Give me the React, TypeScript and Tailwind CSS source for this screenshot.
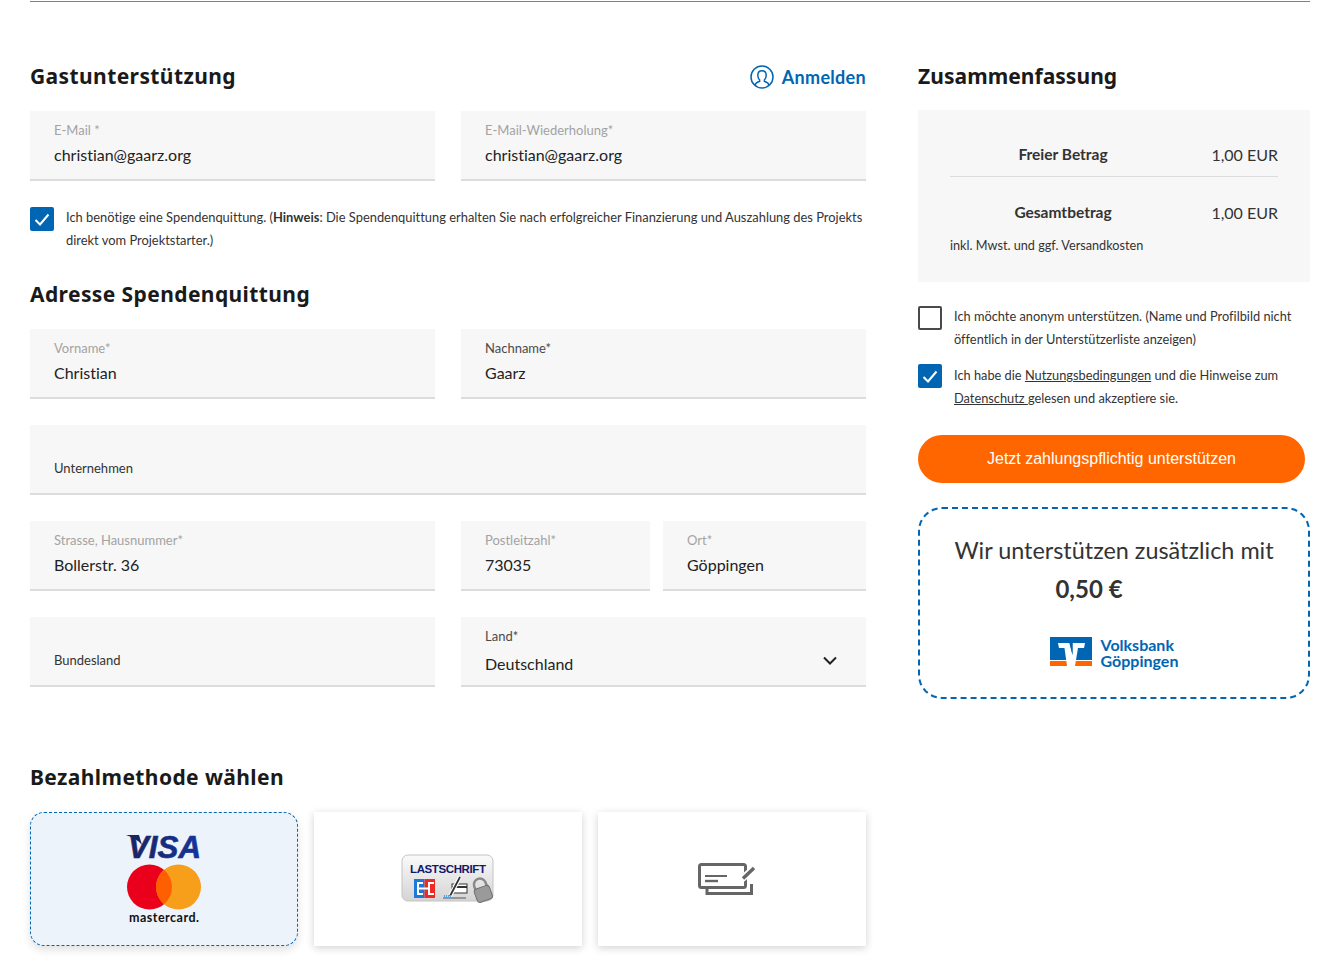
import React from 'react';

const font = { fontFamily: 'Lato, sans-serif' };

function Field({ label, value, faded = true, className = 'w-[405px]', chevron = false }: { label: string; value?: string; faded?: boolean; className?: string; chevron?: boolean }) {
  return (
    <div className={`relative h-[70px] bg-[#f7f7f7] border-b-2 border-[#dcdcdc] px-6 ${className}`}>
      {value ? (
        <>
          <div className={`pt-[11px] text-[13px] leading-[16px] ${faded ? 'text-[#a3a3a3]' : 'text-[#4a4a4a]'}`}>{label}</div>
          <div className={`${chevron ? 'mt-[9px]' : 'mt-[6px]'} text-[16px] leading-[22px] text-[#222]`}>{value}</div>
        </>
      ) : (
        <div className="pt-[35px] text-[13px] leading-[16px] text-[#333]">{label}</div>
      )}
      {chevron && (
        <svg className="absolute right-[28px] top-[39px]" width="16" height="10" viewBox="0 0 16 10" fill="none">
          <path d="M2 1.5 8 7.5 14 1.5" stroke="#222" strokeWidth="2" />
        </svg>
      )}
    </div>
  );
}

function Check({ on }: { on: boolean }) {
  if (!on) return <div className="w-6 h-6 shrink-0 rounded-[2px] border-2 border-[#4a4a4a] bg-white" />;
  return (
    <div className="w-6 h-6 shrink-0 rounded-[2px] bg-[#0066b3] flex items-center justify-center">
      <svg width="16" height="13" viewBox="0 0 16 13" fill="none">
        <path d="M1.5 7 6 11.5 14.5 1.5" stroke="#fff" strokeWidth="2" />
      </svg>
    </div>
  );
}

function Heading({ children, tight = false }: { children: React.ReactNode; tight?: boolean }) {
  return <h2 className={`font-['Noto_Sans',sans-serif] text-[21px] leading-[28px] font-bold text-[#1a1a1a] ${tight ? 'tracking-[0.05px]' : 'tracking-[0.4px]'}`}>{children}</h2>;
}

function CardLogos() {
  return (
    <svg width="76" height="92" viewBox="0 0 76 92" className="overflow-visible">
      <defs>
        <linearGradient id="visa" x1="0" y1="0" x2="1" y2="0">
          <stop offset="0" stopColor="#1a2460" />
          <stop offset="1" stopColor="#14349c" />
        </linearGradient>
      </defs>
      <path d="M0 2h13l3 10C12 7 6 4 0 2z" fill="#1a2460" />
      <text x="2" y="25" textLength="73" lengthAdjust="spacingAndGlyphs" fontFamily="Liberation Sans, sans-serif" fontSize="31" fontWeight="700" fontStyle="italic" fill="url(#visa)" stroke="url(#visa)" strokeWidth="0.6">VISA</text>
      <circle cx="23.500" cy="54" r="22.500" fill="#eb001b" />
      <circle cx="52.500" cy="54" r="22.500" fill="#f79e1b" />
      <path d="M38 36.800a22.500 22.500 0 0 1 0 34.400a22.500 22.500 0 0 1 0-34.400z" fill="#ff5f00" />
      <text x="3" y="89" textLength="70" fontFamily="Lato, sans-serif" fontSize="12.500" fontWeight="700" fill="#111">mastercard.</text>
    </svg>
  );
}

function LastschriftLogo() {
  return (
    <svg width="98" height="52" viewBox="0 0 98 52">
      <defs>
        <linearGradient id="ls" x1="0" y1="0" x2="0" y2="1">
          <stop offset="0" stopColor="#fafafa" />
          <stop offset="1" stopColor="#d4d4d4" />
        </linearGradient>
      </defs>
      <rect x="3" y="2" width="91" height="46" rx="6" fill="url(#ls)" stroke="#c4c4c4" />
      <text x="49" y="19.500" textAnchor="middle" textLength="76" fontFamily="Liberation Sans, sans-serif" fontSize="11.500" fontWeight="700" fill="#14186b">LASTSCHRIFT</text>
      <rect x="15" y="26" width="10.500" height="19" fill="#1f78d8" />
      <rect x="25.500" y="26" width="10.500" height="19" fill="#ee2a24" />
      <path d="M24 30h-5v11h5M20 35.500h11M35 30h-5v11h5" stroke="#fff" strokeWidth="2" fill="none" />
      <rect x="53" y="31" width="15" height="9" fill="#fff" stroke="#333" />
      <path d="M53 34h15" stroke="#333" strokeWidth="2" />
      <path d="M51 43 61 24" stroke="#fff" strokeWidth="4" />
      <path d="M51 43 61 24" stroke="#333" strokeWidth="1.800" />
      <path d="M44 45h23" stroke="#555" />
      <path d="M45 43h7" stroke="#4aa3e8" strokeWidth="2" strokeDasharray="1 1" />
      <path d="M78 36v-5a6 6 0 0 1 12 0v5" stroke="#8a8a8a" strokeWidth="2.500" fill="none" transform="rotate(-20 84 40)" />
      <rect x="76" y="34" width="16" height="14" rx="3" fill="#9a9a9a" stroke="#6f6f6f" transform="rotate(-20 84 40)" />
    </svg>
  );
}

function ChequeIcon() {
  return (
    <svg className="mr-[10px]" width="58" height="34" viewBox="0 0 58 34" fill="none">
      <path d="M9 27v4.500h44.500V22" stroke="#666" strokeWidth="3" />
      <rect x="1.500" y="2.500" width="46" height="23" rx="2" fill="#fff" stroke="#666" strokeWidth="3" />
      <path d="M7 14h22" stroke="#666" strokeWidth="2" />
      <path d="M7 19h13" stroke="#666" strokeWidth="2.400" />
      <path d="M44 17 56 6" stroke="#fff" strokeWidth="7" />
      <path d="M45 16.500 56 6" stroke="#666" strokeWidth="3.400" />
    </svg>
  );
}

function VolksbankLogo() {
  return (
    <div className="flex items-start gap-[9px]">
      <svg width="42" height="29" viewBox="0 0 42 29">
        <rect width="42" height="23" y="0" fill="#0066b3" />
        <rect width="42" height="5" y="24" fill="#ff6600" />
        <path d="M8 6h11.500l3 12V6H35l-1 5h-6l-3 18h-8L14.500 11H9z" fill="#fff" />
        <path d="M22.500 18 19.500 6h3z" fill="#0066b3" />
      </svg>
      <div className="text-[16px] leading-[16px] font-bold text-[#0066b3]">
        <div>Volksbank</div>
        <div>Göppingen</div>
      </div>
    </div>
  );
}

export default function App() {
  return (
    <div className="min-h-[969px] bg-white pl-[30px] pr-[18px] pt-px overflow-hidden [font-variant-ligatures:none]" style={font}>
      <div className="h-px bg-[#808080]" />
      <div className="flex gap-[52px] mt-[59px]">
        {/* Linke Spalte */}
        <div className="w-[836px] shrink-0">
          <div className="flex items-center justify-between h-[30px]">
            <Heading>Gastunterstützung</Heading>
            <a className="mt-[2px] flex items-center gap-[8px] text-[#0066b3] text-[18px] font-bold tracking-[0.3px]">
              <svg width="24" height="24" viewBox="0 0 24 24" fill="none" stroke="#0066b3" strokeWidth="1.5">
                <circle cx="12" cy="12" r="11" />
                <path d="M5 20c.6-2.200 2.500-2.800 4.600-3.600v-1.600c-1.200-1-1.800-2.600-1.800-4.600 0-2.600 1.700-4.400 4.200-4.400s4.200 1.800 4.200 4.400c0 2-.6 3.600-1.800 4.600v1.600c2.100.8 4 1.400 4.600 3.600" />
              </svg>
              Anmelden
            </a>
          </div>

          <div className="flex gap-[26px] mt-[20px]">
            <Field label="E-Mail *" value="christian@gaarz.org" />
            <Field label="E-Mail-Wiederholung*" value="christian@gaarz.org" />
          </div>

          <div className="flex gap-3 mt-[26px]">
            <Check on />
            <p className="-mt-px text-[12.9px] leading-[23px] text-[#333] whitespace-nowrap">
              Ich benötige eine Spendenquittung. (<b>Hinweis</b>: Die Spendenquittung erhalten Sie nach erfolgreicher Finanzierung und Auszahlung des Projekts<br />direkt vom Projektstarter.)
            </p>
          </div>

          <div className="mt-[28px]"><Heading>Adresse Spendenquittung</Heading></div>

          <div className="flex flex-col gap-[26px] mt-[21px]">
            <div className="flex gap-[26px]">
              <Field label="Vorname*" value="Christian" />
              <Field label="Nachname*" value="Gaarz" faded={false} />
            </div>
            <Field label="Unternehmen" className="w-[836px]" />
            <div className="flex gap-[26px]">
              <Field label="Strasse, Hausnummer*" value="Bollerstr. 36" />
              <div className="flex gap-[13px]">
                <Field label="Postleitzahl*" value="73035" className="w-[189px]" />
                <Field label="Ort*" value="Göppingen" className="w-[203px]" />
              </div>
            </div>
            <div className="flex gap-[26px]">
              <Field label="Bundesland" />
              <Field label="Land*" value="Deutschland" faded={false} chevron />
            </div>
          </div>

          <div className="mt-[76px]"><Heading>Bezahlmethode wählen</Heading></div>

          <div className="flex gap-4 mt-[21px]">
            <div className="w-[268px] h-[134px] rounded-[14px] border border-dashed border-[#0066b3] bg-[#edf3fa] shadow-[0_4px_8px_rgba(0,0,0,0.12)] flex items-center justify-center">
              <CardLogos />
            </div>
            <div className="w-[268px] h-[134px] bg-white shadow-[0_2px_8px_rgba(0,0,0,0.18)] flex items-center justify-center">
              <LastschriftLogo />
            </div>
            <div className="w-[268px] h-[134px] bg-white shadow-[0_2px_8px_rgba(0,0,0,0.18)] flex items-center justify-center">
              <ChequeIcon />
            </div>
          </div>
        </div>

        {/* Rechte Spalte */}
        <div className="w-[392px] shrink-0">
          <div className="h-[30px] flex items-center"><Heading tight>Zusammenfassung</Heading></div>

          <div className="mt-[19px] h-[172px] bg-[#f7f7f7] px-8 pt-[33px] text-[15.5px] text-[#333]">
            <div className="flex items-center h-[24px]">
              <div className="w-[226px] text-center font-bold">Freier Betrag</div>
              <div className="flex-1 text-right text-[16px]">1,00 EUR</div>
            </div>
            <div className="h-px bg-[#dcdcdc] mt-[9px]" />
            <div className="flex items-center h-[24px] mt-[24px]">
              <div className="w-[226px] text-center font-bold">Gesamtbetrag</div>
              <div className="flex-1 text-right text-[16px]">1,00 EUR</div>
            </div>
            <div className="text-[12.7px] leading-[16px] mt-[12px]">inkl. Mwst. und ggf. Versandkosten</div>
          </div>

          <div className="flex gap-3 mt-6">
            <Check on={false} />
            <p className="-mt-px text-[12.8px] leading-[23px] text-[#333]">Ich möchte anonym unterstützen. (Name und Profilbild nicht öffentlich in der Unterstützerliste anzeigen)</p>
          </div>
          <div className="flex gap-3 mt-[13px]">
            <Check on />
            <p className="text-[12.8px] leading-[23px] text-[#333]">
              Ich habe die <u>Nutzungsbedingungen</u> und die Hinweise zum <u>Datenschutz </u>gelesen und akzeptiere sie.
            </p>
          </div>

          <button className="block mt-[25px] w-[387px] h-[48px] rounded-full bg-[#ff6600] text-white text-[16px]" style={{ fontFamily: '"Liberation Sans", sans-serif' }}>
            Jetzt zahlungspflichtig unterstützen
          </button>

          <div className="mt-[24px] h-[192px] rounded-[24px] border-2 border-dashed border-[#0066b3] flex flex-col items-center pt-[25px]">
            <div className="text-[23.4px] leading-[32px] text-[#333]">Wir unterstützen zusätzlich mit</div>
            <div className="mt-[7px] mr-[50px] text-[24px] leading-[32px] font-bold text-[#333]">0,50 €</div>
            <div className="mt-[32px]"><VolksbankLogo /></div>
          </div>
        </div>
      </div>
    </div>
  );
}
